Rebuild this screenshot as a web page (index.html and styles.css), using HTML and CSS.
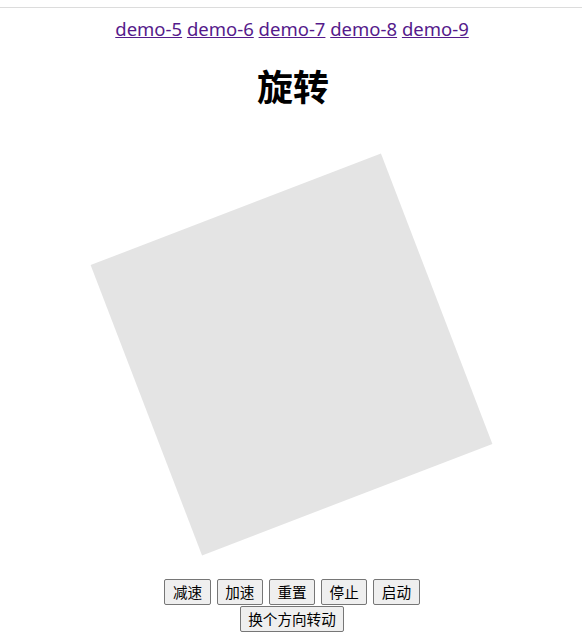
FILE: index.html
```html
<!DOCTYPE html>
<html lang="zh-CN">
<head>
<meta charset="utf-8">
<title>旋转</title>
<link rel="stylesheet" href="styles.css">
</head>
<body>
<div class="topbar"></div>
<nav class="links">
  <a href="#">demo-5</a> <a href="#">demo-6</a> <a href="#">demo-7</a> <a href="#">demo-8</a> <a href="#">demo-9</a>
</nav>
<h1 class="title">旋转</h1>
<div class="stage">
  <div class="square"></div>
</div>
<div class="controls">
  <div class="row">
    <button class="btn">减速</button>
    <button class="btn">加速</button>
    <button class="btn">重置</button>
    <button class="btn">停止</button>
    <button class="btn">启动</button>
  </div>
  <div class="row">
    <button class="btn">换个方向转动</button>
  </div>
</div>
</body>
</html>
```
FILE: styles.css
```css
html, body {
  margin: 0;
  padding: 0;
  background: #ffffff;
}
body {
  font-family: "Noto Sans", "Noto Sans CJK SC", sans-serif;
  color: #000;
}
.topbar {
  height: 7px;
  border-bottom: 1px solid #dcdcdc;
}
.links {
  margin-top: 9px;
  padding-left: 2px;
  text-align: center;
  font-size: 18.5px;
  line-height: 24px;
}
.links a {
  color: #551a8b;
  text-decoration: underline;
}
.title {
  margin: 26px 0 0;
  padding-left: 4px;
  text-align: center;
  font-family: "Noto Sans CJK SC", sans-serif;
  font-size: 36px;
  line-height: 36px;
  font-weight: 700;
}
.stage {
  margin-top: 31px;
  height: 440px;
  display: flex;
  align-items: center;
  justify-content: center;
}
.square {
  width: 311px;
  height: 311px;
  background: #e4e4e4;
  transform: rotate(-21deg);
}
.controls {
  margin-top: 5px;
  padding-left: 2px;
  display: flex;
  flex-direction: column;
  align-items: center;
  gap: 1px;
}
.row {
  display: flex;
  gap: 6px;
  justify-content: center;
}
.btn {
  font-family: "Noto Sans CJK SC", sans-serif;
  font-size: 14.6px;
  line-height: 20px;
  padding: 2px 7.5px;
  border: 1px solid #767676;
  border-radius: 2px;
  background: #efefef;
  color: #000;
  margin: 0;
}
```
